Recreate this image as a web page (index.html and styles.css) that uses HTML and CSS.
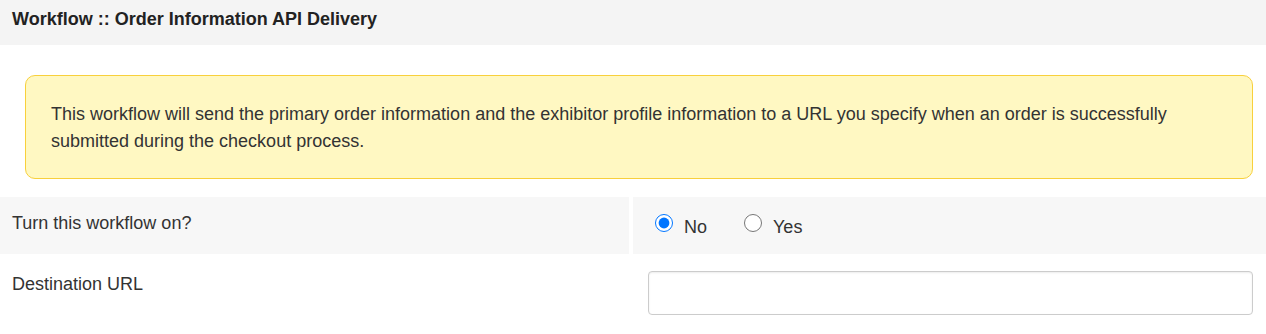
FILE: index.html
```html
<!DOCTYPE html>
<html lang="en">
<head>
  <meta charset="UTF-8" />
  <title>Workflow :: Order Information API Delivery</title>
  <link rel="stylesheet" href="styles.css">
</head>
<body>
  <div class="panel-heading">Workflow :: Order Information API Delivery</div>

  <div class="panel-body">
    <div class="alert">
      This workflow will send the primary order information and the exhibitor profile information to a URL you specify when an order is successfully submitted during the checkout process.
    </div>

    <div class="form-row shaded">
      <div class="label-col">Turn this workflow on?</div>
      <div class="field-col radios">
        <label class="radio"><input type="radio" name="enabled" value="0" checked /> No</label>
        <label class="radio"><input type="radio" name="enabled" value="1" /> Yes</label>
      </div>
    </div>

    <div class="form-row">
      <div class="label-col">Destination URL</div>
      <div class="field-col">
        <input type="text" class="text-input" />
      </div>
    </div>
  </div>
</body>
</html>
```

FILE: styles.css
```css
body {
  margin: 0;
  font-family: 'Liberation Sans', Arial, sans-serif;
  font-size: 18px;
  line-height: 27px;
  color: #333;
  background: #fff;
}

.panel-heading {
  height: 45px;
  box-sizing: border-box;
  padding: 9px 12px;
  line-height: 21px;
  font-weight: bold;
  color: #222;
  background: #f4f4f4;
}

.panel-body {
  padding-top: 30px;
}

.alert {
  margin: 0 13px 18px 25px;
  padding: 25px 25px 23px;
  background: #fff8c2;
  border: 1px solid #f8d03c;
  border-radius: 10px;
}

.form-row {
  display: flex;
  gap: 4px;
}

.label-col {
  flex: 0 0 629px;
  padding: 13px 12px;
  box-sizing: border-box;
}

.field-col {
  flex: 1;
  padding: 17px 13px 0 15px;
}

.shaded .label-col,
.shaded .field-col {
  background: #f7f7f7;
}

.form-row:not(.shaded) .label-col {
  padding-top: 17px;
}

.radios {
  display: flex;
  align-items: flex-start;
  gap: 37px;
  padding: 17px 22px 13px;
}

.radio {
  display: flex;
  align-items: flex-start;
  gap: 11px;
}

.radio input {
  width: 18px;
  height: 18px;
  margin: 0;
}

.text-input {
  width: 100%;
  height: 44px;
  box-sizing: border-box;
  border: 1px solid #ccc;
  border-radius: 4px;
  box-shadow: inset 0 1px 2px rgba(0, 0, 0, 0.08);
  padding: 6px 10px;
  font: inherit;
}
```
